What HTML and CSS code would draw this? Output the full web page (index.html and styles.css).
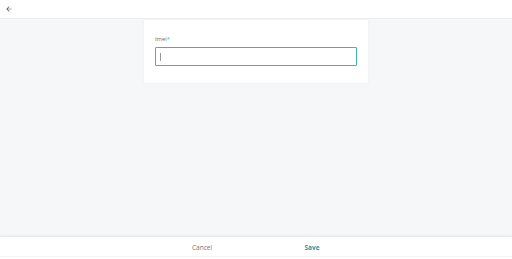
FILE: index.html
```html
<!DOCTYPE html>
<html>
<head>
<meta charset="utf-8">
<link rel="stylesheet" href="styles.css">
</head>
<body>
<div class="page">
  <header class="topbar">
    <button class="back" aria-label="Back">
      <svg width="8" height="8" viewBox="0 0 24 24"><path d="M20 11H7.83l5.59-5.59L12 4l-8 8 8 8 1.41-1.41L7.83 13H20v-2z" fill="#555"/></svg>
    </button>
  </header>
  <main class="content">
    <section class="card">
      <label class="label">Imei<span class="req">*</span></label>
      <div class="input"><span class="caret"></span></div>
    </section>
  </main>
  <footer class="actions">
    <div class="bar">
      <button class="btn cancel">Cancel</button>
      <button class="btn save">Save</button>
    </div>
  </footer>
</div>
</body>
</html>
```
FILE: styles.css
```css
html, body {
  margin: 0;
  padding: 0;
}
body {
  font-family: "Open Sans", "Noto Sans", sans-serif;
  background: #f6f7f9;
}
.page {
  width: 512px;
  height: 259px;
  display: flex;
  flex-direction: column;
}
.topbar {
  height: 18px;
  background: #fff;
  border-bottom: 1px solid #eceef1;
  display: flex;
  align-items: center;
  padding-left: 5px;
  flex: none;
}
.back {
  border: 0;
  background: none;
  padding: 0;
  width: 8px;
  height: 8px;
  display: flex;
}
.content {
  flex: 1;
  display: flex;
  justify-content: center;
  align-items: flex-start;
  padding-top: 1px;
}
.card {
  width: 202px;
  background: #fff;
  padding: 15px 11px 17px;
  box-shadow: 0 0 2px rgba(0,0,0,0.06);
  display: flex;
  flex-direction: column;
}
.label {
  font-size: 5.8px;
  color: #666;
  line-height: 8px;
  margin-bottom: 4px;
}
.req {
  color: #4fb3b3;
}
.input {
  box-sizing: border-box;
  height: 19px;
  border: 1px solid #45b0b0;
  border-radius: 1px;
  display: flex;
  align-items: center;
  padding-left: 4px;
}
.caret {
  width: 1px;
  height: 8px;
  background: #999;
}
.actions {
  flex: none;
  height: 22px;
  background: #fff;
  box-shadow: 0 -1px 2px rgba(0,0,0,0.05);
  border-top: 1px solid #ececec;
  display: flex;
  flex-direction: column;
}
.bar {
  box-sizing: border-box;
  height: 20px;
  padding-top: 2px;
  border-bottom: 1px solid #f3f3f3;
  display: flex;
  justify-content: center;
  align-items: center;
  padding-left: 2px;
}
.btn {
  width: 110px;
  border: 0;
  background: none;
  padding: 0;
  font-family: "Open Sans", "Noto Sans", sans-serif;
  font-size: 6.5px;
}
.cancel {
  color: #777;
}
.save {
  color: #1a98a8;
  font-weight: 700;
}
```
